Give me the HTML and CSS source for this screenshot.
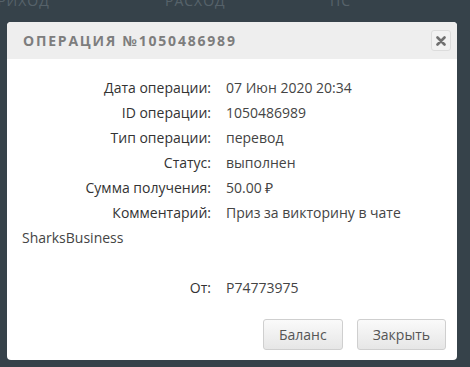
FILE: index.html
```html
<!DOCTYPE html>
<html lang="ru">
<head>
    <meta charset="UTF-8">
    <title>Операция</title>
    <link rel="stylesheet" href="styles.css">
</head>
<body>

    <!-- page behind the dialog -->
    <div class="backdrop-head">
        <span class="col-in">Приход</span>
        <span class="col-out">Расход</span>
        <span class="col-ps">ПС</span>
    </div>

    <div class="modal">
        <div class="modal-header">
            <h3>Операция №1050486989</h3>
            <button class="close-btn" type="button" aria-label="Закрыть">
                <svg width="10" height="10" viewBox="0 0 10 10">
                    <path d="M1.5 1.5 L8.5 8.5 M8.5 1.5 L1.5 8.5" stroke="#707070" stroke-width="2.6" stroke-linecap="round"/>
                </svg>
            </button>
        </div>

        <div class="modal-body">
            <div class="row"><span class="label">Дата операции:</span>07 Июн 2020 20:34</div>
            <div class="row"><span class="label">ID операции:</span>1050486989</div>
            <div class="row"><span class="label">Тип операции:</span>перевод</div>
            <div class="row"><span class="label">Статус:</span>выполнен</div>
            <div class="row"><span class="label">Сумма получения:</span>50.00 &#8381;</div>
            <div class="row"><span class="label">Комментарий:</span>Приз за викторину в чате SharksBusiness</div>
            <div class="row empty"></div>
            <div class="row"><span class="label">От:</span>P74773975</div>
        </div>

        <div class="modal-footer">
            <button class="btn" type="button">Баланс</button>
            <button class="btn" type="button">Закрыть</button>
        </div>
    </div>

</body>
</html>
```

FILE: styles.css
```css
body {
    margin: 0;
    padding: 0;
    background-color: #36424a;
    font-family: "Open Sans", Arial, sans-serif;
    height: 367px;
    overflow: hidden;
}
.backdrop-head {
    position: absolute;
    top: -9px;
    left: 0;
    width: 470px;
    font-size: 14px;
    text-transform: uppercase;
    color: #56626a;
    letter-spacing: 1px;
}
.backdrop-head span {
    position: absolute;
}
.col-in { left: -14px; }
.col-out { left: 165px; }
.col-ps { left: 330px; }
.modal {
    position: relative;
    margin: 22px 0 0 7px;
    width: 450px;
    background-color: #fff;
    border-radius: 4px;
    overflow: hidden;
}
.modal-header {
    display: flex;
    align-items: center;
    justify-content: space-between;
    height: 37px;
    padding: 0 6px 0 16px;
    background-color: #eeeeee;
}
.modal-header h3 {
    margin: 0;
    font-size: 14px;
    font-weight: bold;
    letter-spacing: 1.8px;
    text-transform: uppercase;
    color: #7d7d7d;
}
.close-btn {
    display: flex;
    align-items: center;
    justify-content: center;
    width: 20px;
    height: 21px;
    padding: 0;
    border: 1px solid #dcdcdc;
    border-radius: 3px;
    background-color: #f2f2f2;
    cursor: pointer;
}
.modal-body {
    padding: 16px 15px 0 15px;
    font-size: 14px;
    line-height: 25px;
    color: #444;
}
.row {
    min-height: 25px;
}
.label {
    display: inline-block;
    width: 189px;
    margin-right: 15px;
    text-align: right;
    color: #333;
}
.modal-footer {
    display: flex;
    justify-content: flex-end;
    gap: 14px;
    padding: 19px 11px 10px 0;
}
.btn {
    height: 31px;
    padding: 0 15px;
    border: 1px solid #cfcfcf;
    border-radius: 3px;
    background: linear-gradient(#fafafa, #e6e6e6);
    font-family: "Open Sans", Arial, sans-serif;
    font-size: 14px;
    color: #555;
    cursor: pointer;
}
```
